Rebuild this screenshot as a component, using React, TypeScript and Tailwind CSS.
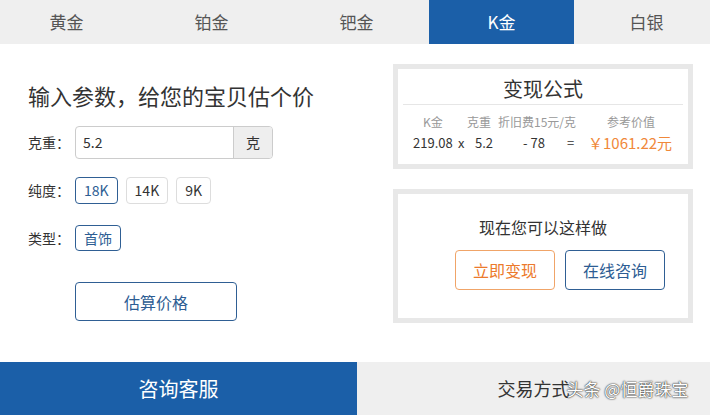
import React, { useState } from 'react';

// 估价页面：顶部金属分类、左侧参数、右侧公式与操作

const tabs = ['黄金', '铂金', '钯金', 'K金', '白银'];
const purities = ['18K', '14K', '9K'];

const font = { fontFamily: '"Noto Sans CJK SC", "Noto Sans", sans-serif' };

const TabBar: React.FC<{ active: string; onSelect: (t: string) => void }> = ({ active, onSelect }) => (
  <div className="h-[44px] overflow-hidden bg-[#efefef]">
    <div className="flex -ml-[6px] w-[725px] h-full">
      {tabs.map((t) => (
        <button
          key={t}
          onClick={() => onSelect(t)}
          className={
            'w-[145px] shrink-0 h-full flex items-center justify-center text-[17px] ' +
            (active === t ? 'bg-[#1b5fa8] text-white' : 'text-[#555]')
          }
        >
          {t}
        </button>
      ))}
    </div>
  </div>
);

const Formula: React.FC = () => (
  <div className="h-[105px] border-[5px] border-[#e8e8e8] bg-white">
    <div className="mx-[5px] pt-[7px] pb-[2px] border-b border-[#e6e6e6] text-center text-[20px] leading-[26px] text-[#333]">
      变现公式
    </div>
    <div className="flex mt-[8px] text-[12px] leading-[18px] text-[#999] whitespace-nowrap">
      <span className="w-[69px] pl-[25px] shrink-0">K金</span>
      <span className="w-[31px] shrink-0">克重</span>
      <span className="w-[109px] shrink-0">折旧费15元/克</span>
      <span>参考价值</span>
    </div>
    <div className="flex items-center mt-[2px] h-[20px] text-[13px] text-[#333] whitespace-nowrap">
      <span className="w-[60px] pl-[15px] shrink-0">219.08</span>
      <span className="w-[17px] shrink-0">x</span>
      <span className="w-[48px] shrink-0">5.2</span>
      <span className="w-[44px] shrink-0">- 78</span>
      <span className="w-[21px] shrink-0">=</span>
      <span className="text-[15px] text-[#f0883a]">￥1061.22元</span>
    </div>
  </div>
);

const Actions: React.FC = () => (
  <div className="h-[134px] mt-[20px] border-[5px] border-[#e8e8e8] bg-white">
    <div className="mt-[21px] text-center text-[16px] leading-[24px] text-[#333]">现在您可以这样做</div>
    <div className="flex gap-[10px] pl-[57px] mt-[11px]">
      <button className="w-[100px] h-[40px] rounded-[4px] border border-[#f0a468] text-[16px] text-[#ec7a2c]">
        立即变现
      </button>
      <button className="w-[100px] h-[40px] rounded-[4px] border border-[#2f5f94] text-[16px] text-[#2d5d93]">
        在线咨询
      </button>
    </div>
  </div>
);

export default function App() {
  const [tab, setTab] = useState('K金');
  const [purity, setPurity] = useState('18K');
  const [weight, setWeight] = useState('5.2');

  return (
    <div style={font} className="w-[710px] h-[415px] bg-white overflow-hidden text-[#333]">
      <TabBar active={tab} onSelect={setTab} />

      <div className="flex h-[318px]">
        {/* 左侧：参数输入 */}
        <div className="flex flex-col pl-[28px] pt-[37px]">
          <h1 className="text-[22px] leading-[28px] text-[#333]">输入参数，给您的宝贝估个价</h1>

          <div className="flex items-center mt-[17px] h-[33px]">
            <span className="w-[47px] text-[14px]">克重：</span>
            <div className="flex w-[198px] h-full border border-[#ccc] rounded-[4px] overflow-hidden">
              <input
                value={weight}
                onChange={(e) => setWeight(e.target.value)}
                className="flex-1 min-w-0 px-[7px] text-[14px] text-[#333] outline-none"
              />
              <span className="w-[39px] flex items-center justify-center bg-[#eee] border-l border-[#ccc] text-[14px]">
                克
              </span>
            </div>
          </div>

          <div className="flex items-center mt-[18px] h-[27px]">
            <span className="w-[47px] text-[14px]">纯度：</span>
            <div className="flex gap-[8px] h-full">
              {purities.map((p) => (
                <button
                  key={p}
                  onClick={() => setPurity(p)}
                  className={
                    'px-[8px] h-full rounded-[4px] border text-[14px] ' +
                    (purity === p ? 'border-[#2f5f94] text-[#2d5d93]' : 'border-[#ddd] text-[#333]')
                  }
                >
                  {p}
                </button>
              ))}
            </div>
          </div>

          <div className="flex items-center mt-[21px] h-[26px]">
            <span className="w-[47px] text-[14px]">类型：</span>
            <button className="px-[8px] h-full rounded-[4px] border border-[#2f5f94] text-[14px] text-[#2d5d93]">
              首饰
            </button>
          </div>

          <button className="mt-[31px] ml-[47px] w-[162px] h-[39px] rounded-[4px] border border-[#2f5f94] text-[16px] text-[#2d5d93]">
            估算价格
          </button>
        </div>

        {/* 右侧：公式与操作 */}
        <div className="w-[300px] ml-auto mr-[17px] pt-[20px]">
          <Formula />
          <Actions />
        </div>
      </div>

      <div className="flex h-[53px]">
        <button className="w-[357px] bg-[#1b5fa8] text-white text-[20px]">咨询客服</button>
        <div className="flex-1 bg-[#efefef] flex items-center justify-center">
          <span className="relative text-[18px] text-[#333]">
            交易方式
            <span className="absolute left-[69px] top-[1px] whitespace-nowrap text-[17px] text-white [text-shadow:0_0_2px_#222,0_0_1px_#222]">
              头条 @恒爵珠宝
            </span>
          </span>
        </div>
      </div>
    </div>
  );
}
